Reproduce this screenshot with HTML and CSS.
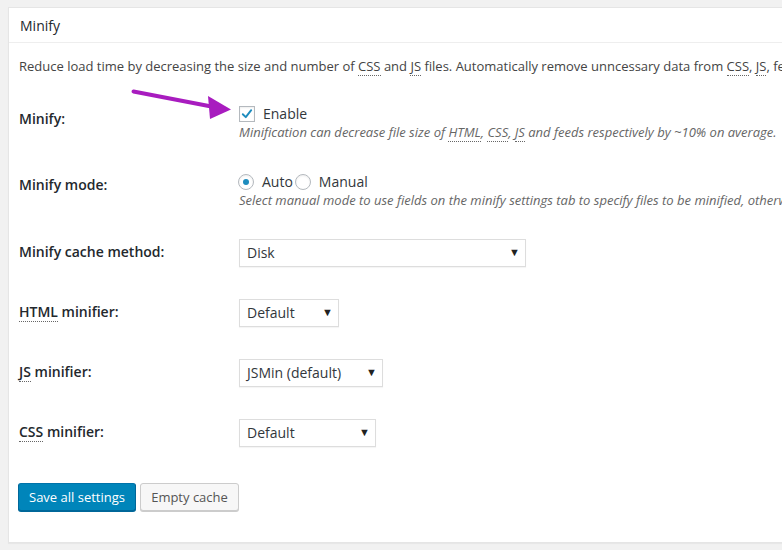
FILE: index.html
```html
<!DOCTYPE html>
<html>
<head>
<meta charset="utf-8">
<link rel="stylesheet" href="styles.css">
</head>
<body>
<div class="page">
  <div class="panel">
    <h3 class="hndle">Minify</h3>
    <div class="inside">
      <p class="intro">Reduce load time by decreasing the size and number of <abbr>CSS</abbr> and <abbr>JS</abbr> files. Automatically remove unncessary data from <abbr>CSS</abbr>, <abbr>JS</abbr>, feed, page and post <abbr>HTML</abbr>.</p>

      <div class="row row-a">
        <div class="th">Minify:</div>
        <div class="td">
          <label class="opt-check"><span class="checkbox"><svg viewBox="0 0 16 16" width="14" height="14"><path d="M3.2 8.3 L6.6 11.6 L12.8 3.6" fill="none" stroke="#1e8cbe" stroke-width="2.2" stroke-linecap="round" stroke-linejoin="round"/></svg></span><span class="opt-text">Enable</span></label>
          <span class="desc">Minification can decrease file size of <abbr>HTML</abbr>, <abbr>CSS</abbr>, <abbr>JS</abbr> and feeds respectively by ~10% on average.</span>
        </div>
      </div>

      <div class="row row-b">
        <div class="th">Minify mode:</div>
        <div class="td">
          <div class="radios">
            <label class="opt"><span class="radio checked"></span><span class="opt-text">Auto</span></label>
            <label class="opt"><span class="radio"></span><span class="opt-text">Manual</span></label>
          </div>
          <span class="desc">Select manual mode to use fields on the minify settings tab to specify files to be minified, otherwise files will be minified automatically.</span>
        </div>
      </div>

      <div class="row row-sel">
        <div class="th">Minify cache method:</div>
        <div class="td"><div class="select w-disk"><span>Disk</span><span class="caret">▼</span></div></div>
      </div>

      <div class="row row-sel">
        <div class="th"><abbr>HTML</abbr> minifier:</div>
        <div class="td"><div class="select w-html"><span>Default</span><span class="caret">▼</span></div></div>
      </div>

      <div class="row row-sel">
        <div class="th"><abbr>JS</abbr> minifier:</div>
        <div class="td"><div class="select w-js"><span>JSMin (default)</span><span class="caret">▼</span></div></div>
      </div>

      <div class="row row-sel">
        <div class="th"><abbr>CSS</abbr> minifier:</div>
        <div class="td"><div class="select w-css"><span>Default</span><span class="caret">▼</span></div></div>
      </div>

      <div class="actions">
        <button class="btn btn-primary">Save all settings</button>
        <button class="btn btn-secondary">Empty cache</button>
      </div>
    </div>
  </div>

  <svg class="arrow" width="120" height="40" viewBox="0 0 120 40">
    <path d="M2.5 5.5 L83 21" stroke="#a81cbf" stroke-width="4" stroke-linecap="round"/>
    <path d="M77 10 L100 23.5 L79 33 Z" fill="#a81cbf"/>
  </svg>
</div>
</body>
</html>
```

FILE: styles.css
```css
html, body {
  margin: 0;
  padding: 0;
}
body {
  background: #f1f1f1;
  font-family: "Open Sans", "Noto Sans", sans-serif;
  color: #444;
  overflow: hidden;
  width: 782px;
  height: 550px;
}
.page {
  position: relative;
  padding: 7px 0 0 8px;
}
.panel {
  width: 820px;
  background: #fff;
  border: 1px solid #e5e5e5;
  box-shadow: 0 1px 1px rgba(0,0,0,0.04);
}
.hndle {
  margin: 0;
  height: 35px;
  box-sizing: border-box;
  padding: 0 11px;
  font-size: 14px;
  font-weight: 400;
  line-height: 35px;
  color: #23282d;
  border-bottom: 1px solid #eee;
}
.inside {
  padding: 0 10px 31px 10px;
}
abbr {
  text-decoration: none;
  border-bottom: 1px dotted #666;
}
.intro {
  margin: 0;
  padding-top: 13px;
  font-size: 13px;
  line-height: 20px;
  color: #444;
  white-space: nowrap;
}
.row {
  display: flex;
  align-items: flex-start;
}
.th {
  width: 220px;
  flex: none;
  font-size: 14px;
  font-weight: 600;
  color: #23282d;
  line-height: 18px;
}
.td {
  flex: 1;
  font-size: 14px;
  line-height: 18px;
  color: #32373c;
}
.row-a {
  margin-top: 29px;
}
.row-a .th {
  padding-top: 5px;
}
.opt-check {
  display: flex;
  align-items: center;
  width: fit-content;
  height: 18px;
  color: #32373c;
}
.row-b {
  margin-top: 32px;
}
.row-b .th {
  padding-top: 3px;
}
.row-sel {
  margin-top: 30px;
  align-items: center;
  height: 28px;
}
.row-sel + .row-sel {
  margin-top: 32px;
}
.row-sel .th {
  margin-top: -3px;
}
.opt {
  display: flex;
  align-items: center;
  color: #32373c;
}
.opt-text {
  margin-left: 8px;
}
.checkbox {
  width: 14px;
  height: 14px;
  border: 1px solid #b4b9be;
  background: #fff;
  box-shadow: inset 0 1px 2px rgba(0,0,0,0.07);
  display: flex;
  align-items: center;
  justify-content: center;
}
.radios {
  display: flex;
  gap: 2px;
  margin-left: -1px;
  height: 18px;
}
.radio {
  width: 14px;
  height: 14px;
  border: 1px solid #b4b9be;
  border-radius: 50%;
  background: #fff;
  box-shadow: inset 0 1px 2px rgba(0,0,0,0.07);
  position: relative;
}
.radio.checked::after {
  content: "";
  position: absolute;
  left: 4px;
  top: 4px;
  width: 6px;
  height: 6px;
  border-radius: 50%;
  background: #1e8cbe;
}
.desc {
  display: block;
  font-size: 13px;
  font-style: italic;
  color: #666;
  white-space: nowrap;
}
.select {
  height: 28px;
  box-sizing: border-box;
  border: 1px solid #ddd;
  background: #fff;
  box-shadow: 0 1px 1px rgba(0,0,0,0.04);
  display: flex;
  align-items: center;
  justify-content: space-between;
  padding: 0 5px 0 7px;
  font-size: 14px;
  color: #32373c;
}
.caret {
  font-size: 11px;
  color: #222;
  margin-top: -3px;
}
.w-disk { width: 287px; }
.w-html { width: 100px; }
.w-js { width: 144px; }
.w-css { width: 137px; }
.actions {
  margin-top: 36px;
  display: flex;
  gap: 4px;
  margin-left: -1px;
}
.btn {
  height: 28px;
  box-sizing: border-box;
  font-family: "Open Sans", "Noto Sans", sans-serif;
  font-size: 13px;
  line-height: 26px;
  padding: 0 10px 1px;
  border-radius: 3px;
  border: 1px solid;
  cursor: pointer;
}
.btn-primary {
  width: 118px;
  background: #0085ba;
  border-color: #0073aa #006799 #006799;
  color: #fff;
  box-shadow: 0 1px 0 #006799;
}
.btn-secondary {
  width: 99px;
  background: #f7f7f7;
  border-color: #ccc;
  color: #555;
  box-shadow: 0 1px 0 #ccc;
}
.arrow {
  position: absolute;
  left: 131px;
  top: 86px;
}
```
